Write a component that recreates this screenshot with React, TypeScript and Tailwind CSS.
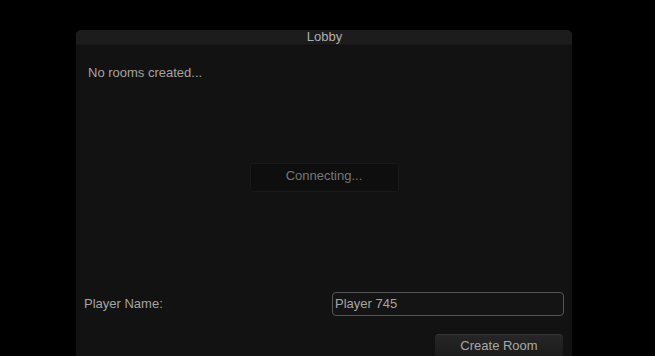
import React from "react";

export default function App() {
  return (
    <div
      className="h-[356px] w-[655px] overflow-hidden bg-black pl-[76px] pt-[30px]"
      style={{ fontFamily: '"Liberation Sans", Arial, sans-serif' }}
    >
      <div className="flex h-[340px] w-[496px] flex-col overflow-hidden rounded-t-[5px] bg-[#121212]">
        <div className="h-[15px] border-b border-[#161616] bg-[#1c1c1c] pl-[1px] text-center text-[13px] leading-[14px] text-[#b0b0b0]">
          Lobby
        </div>
        <div className="flex flex-col px-[8px] pt-[20px]">
          <div className="pl-[4px] text-[13px] leading-[15px] text-[#a4a4a4]">No rooms created...</div>
          <div className="mt-[83px] flex justify-center">
            <div className="flex h-[29px] w-[149px] items-start justify-center rounded-[3px] border border-[#191919] bg-[#0e0e0e] pt-[4px] text-[13px] leading-[15px] text-[#777777]">
              Connecting...
            </div>
          </div>
          <div className="mt-[100px] flex h-[24px] items-center justify-between">
            <span className="text-[13px] text-[#a4a4a4]">Player Name:</span>
            <div className="flex h-[24px] w-[232px] items-start rounded-[4px] border border-[#555555] bg-[#141414] px-[2px] pt-[3px] text-[13px] leading-[15px] text-[#a4a4a4]">
              Player 745
            </div>
          </div>
          <div className="mt-[18px] flex justify-end pr-[1px]">
            <div className="flex h-[26px] w-[128px] items-start justify-center rounded-t-[4px] border-t border-[#333333] bg-gradient-to-b from-[#262626] to-[#1a1a1a] pt-[3px] text-[13px] leading-[15px] text-[#a8a8a8]">
              Create Room
            </div>
          </div>
        </div>
      </div>
    </div>
  );
}
